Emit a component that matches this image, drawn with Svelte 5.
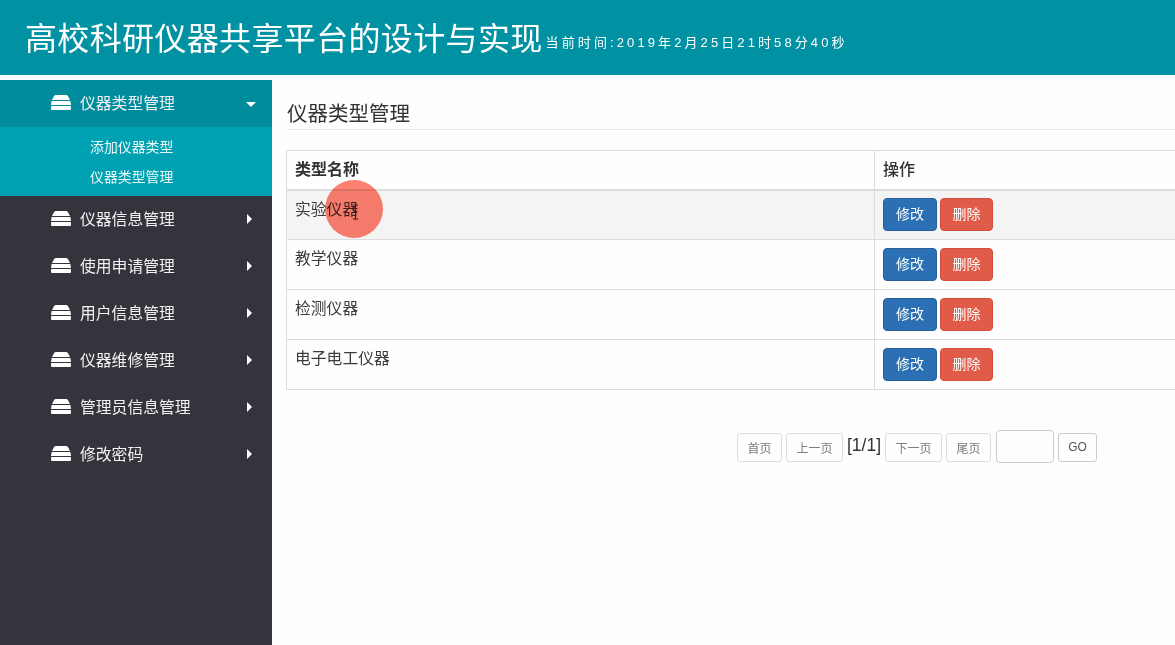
<script>
  const menus = ['仪器信息管理', '使用申请管理', '用户信息管理', '仪器维修管理', '管理员信息管理', '修改密码'];
  const rows = ['实验仪器', '教学仪器', '检测仪器', '电子电工仪器'];
</script>

{#snippet stack()}
  <svg class="stack" viewBox="0 0 20 15" width="20" height="15" aria-hidden="true">
    <path d="M4.5 0 H15.5 Q16.5 0 17.2 1.5 L19 5 H1 L2.8 1.5 Q3.5 0 4.5 0 Z" fill="#fff" />
    <path d="M0.6 6 H19.4 L20 10 H0 Z" fill="#fff" />
    <path d="M0.2 11 H19.8 L20 14 Q20 15 19 15 H1 Q0 15 0 14 Z" fill="#fff" />
  </svg>
{/snippet}

<div class="page">
  <header class="top">
    <h1>高校科研仪器共享平台的设计与实现</h1>
    <span class="time">当前时间:2019年2月25日21时58分40秒</span>
  </header>
  <div class="body">
    <aside class="side">
      <div class="item active">
        {@render stack()}
        <span class="label">仪器类型管理</span>
        <span class="caret down"></span>
      </div>
      <div class="sub">
        <div>添加仪器类型</div>
        <div>仪器类型管理</div>
      </div>
      {#each menus as m}
        <div class="item">
          {@render stack()}
          <span class="label">{m}</span>
          <span class="caret right"></span>
        </div>
      {/each}
    </aside>
    <main class="main">
      <h2>仪器类型管理</h2>
      <table>
        <thead>
          <tr><th class="c1">类型名称</th><th>操作</th></tr>
        </thead>
        <tbody>
          {#each rows as r, i}
            <tr class:hover={i === 0}>
              <td class="name">
                {#if i === 0}
                  <span class="dot"></span>
                  <svg class="ibeam" viewBox="0 0 7 16" width="7" height="16" aria-hidden="true">
                    <path d="M1 1 H6 M3.5 1 V15 M1 15 H6" stroke="#2a1c1a" stroke-width="1" fill="none" />
                  </svg>
                {/if}
                {r}
              </td>
              <td class="ops"><button class="btn blue">修改</button><button class="btn red">删除</button></td>
            </tr>
          {/each}
        </tbody>
      </table>
      <div class="pager">
        <button class="pg w45">首页</button>
        <button class="pg w57">上一页</button>
        <span class="count">[1/1]</span>
        <button class="pg w57">下一页</button>
        <button class="pg w45 tail">尾页</button>
        <input class="box" aria-label="page" />
        <button class="pg go">GO</button>
      </div>
    </main>
  </div>
</div>

<style>
  :global(body) { margin: 0; background: #fdfefd; }
  .page {
    width: 1175px; height: 645px; overflow: hidden;
    font-family: "Liberation Sans", "Noto Sans CJK SC", sans-serif;
    color: #333;
  }
  .top {
    height: 75px; background: #0091a3; color: #fff;
    display: flex; align-items: center; padding-left: 25px; box-sizing: border-box;
  }
  h1 { margin: 3px 0 0; font-size: 32px; font-weight: 400; letter-spacing: 0.35px; line-height: 72px; white-space: nowrap; }
  .time { font-size: 13px; letter-spacing: 3.1px; margin-top: 8px; white-space: nowrap; margin-left: 3px; }
  .body { display: flex; margin-top: 5px; height: 565px; }
  .side { width: 272px; background: #33343c; flex: none; }
  .item {
    height: 47px; display: flex; align-items: center; padding-left: 51px;
    box-sizing: border-box; color: #f0f2f2; font-size: 15.8px; position: relative;
  }
  .item.active { background: #008c9d; }
  .stack { flex: none; margin-bottom: 2px; }
  .label { margin-left: 9px; margin-top: -3px; }
  .caret { position: absolute; width: 0; height: 0; }
  .caret.down { left: 246px; top: 22px; border-left: 5px solid transparent; border-right: 5px solid transparent; border-top: 5px solid #fff; }
  .caret.right { left: 247px; top: 18px; border-top: 5px solid transparent; border-bottom: 5px solid transparent; border-left: 5px solid #fff; }
  .sub {
    height: 69px; background: #00a1b2; color: #e8f8f8; font-size: 13.9px;
    padding: 6px 0 0 90px; box-sizing: border-box; line-height: 29.5px;
  }
  .main { flex: 1; min-width: 0; padding-left: 15px; overflow: hidden; }
  h2 {
    margin: 19px 0 20px; height: 31px; box-sizing: border-box; font-size: 20.5px; font-weight: 400;
    line-height: 30px; border-bottom: 1px solid #e8e8e8; color: #333;
  }
  table { width: 900px; margin-left: -1px; border-collapse: collapse; font-size: 15.8px; table-layout: fixed; }
  th, td { border: 1px solid #ddd; text-align: left; padding: 0 8px; box-sizing: border-box; }
  thead tr { height: 39px; }
  th { font-size: 16px; font-weight: 700; border-bottom-width: 2px; color: #333; padding-bottom: 4px; }
  th:last-child, td:last-child { border-right: none; }
  .c1 { width: 588px; }
  th:not(.c1) { font-weight: 500; }
  tbody tr { height: 50px; }
  tr.hover { background: #f4f4f4; }
  td.name { vertical-align: top; padding-top: 9px; line-height: 20px; position: relative; color: #3c3c3c; }
  .dot {
    position: absolute; left: 38px; top: -11px; width: 58px; height: 58px; border-radius: 50%;
    background: #ff7766; opacity: .93; mix-blend-mode: multiply;
  }
  .ibeam { position: absolute; left: 65px; top: 13px; }
  .btn {
    width: 54px; height: 33px; border-radius: 4px; border: 1px solid; color: #fff;
    font: 14px/14px "Liberation Sans", "Noto Sans CJK SC", sans-serif; padding: 0 0 1px; vertical-align: middle;
  }
  .blue { background: #2b70b4; border-color: #285f9b; margin-right: 3px; }
  .red { background: #e05c48; border-color: #d24f3d; width: 53px; }
  .pager { display: flex; align-items: center; margin: 40px 0 0 450px; height: 34px; }
  .pg {
    height: 29px; box-sizing: border-box; background: #fdfefd; border: 1px solid #ddd; border-radius: 3px;
    color: #7c7c7c; font: 12px "Liberation Sans", "Noto Sans CJK SC", sans-serif; padding: 0;
  }
  .w45 { width: 45px; margin-right: 4px; }
  .w57 { width: 57px; }
  .count { font-size: 17.5px; width: 42px; text-align: center; color: #333; margin-top: -3px; }
  .tail { margin-left: 4px; margin-right: 5px; }
  .box { width: 58px; height: 33px; box-sizing: border-box; border: 1px solid #ccc; border-radius: 4px; background: #fdfefd; margin: -2px 4px 0 0; padding: 0; }
  .go { width: 39px; color: #555; border-color: #ccc; }
</style>
